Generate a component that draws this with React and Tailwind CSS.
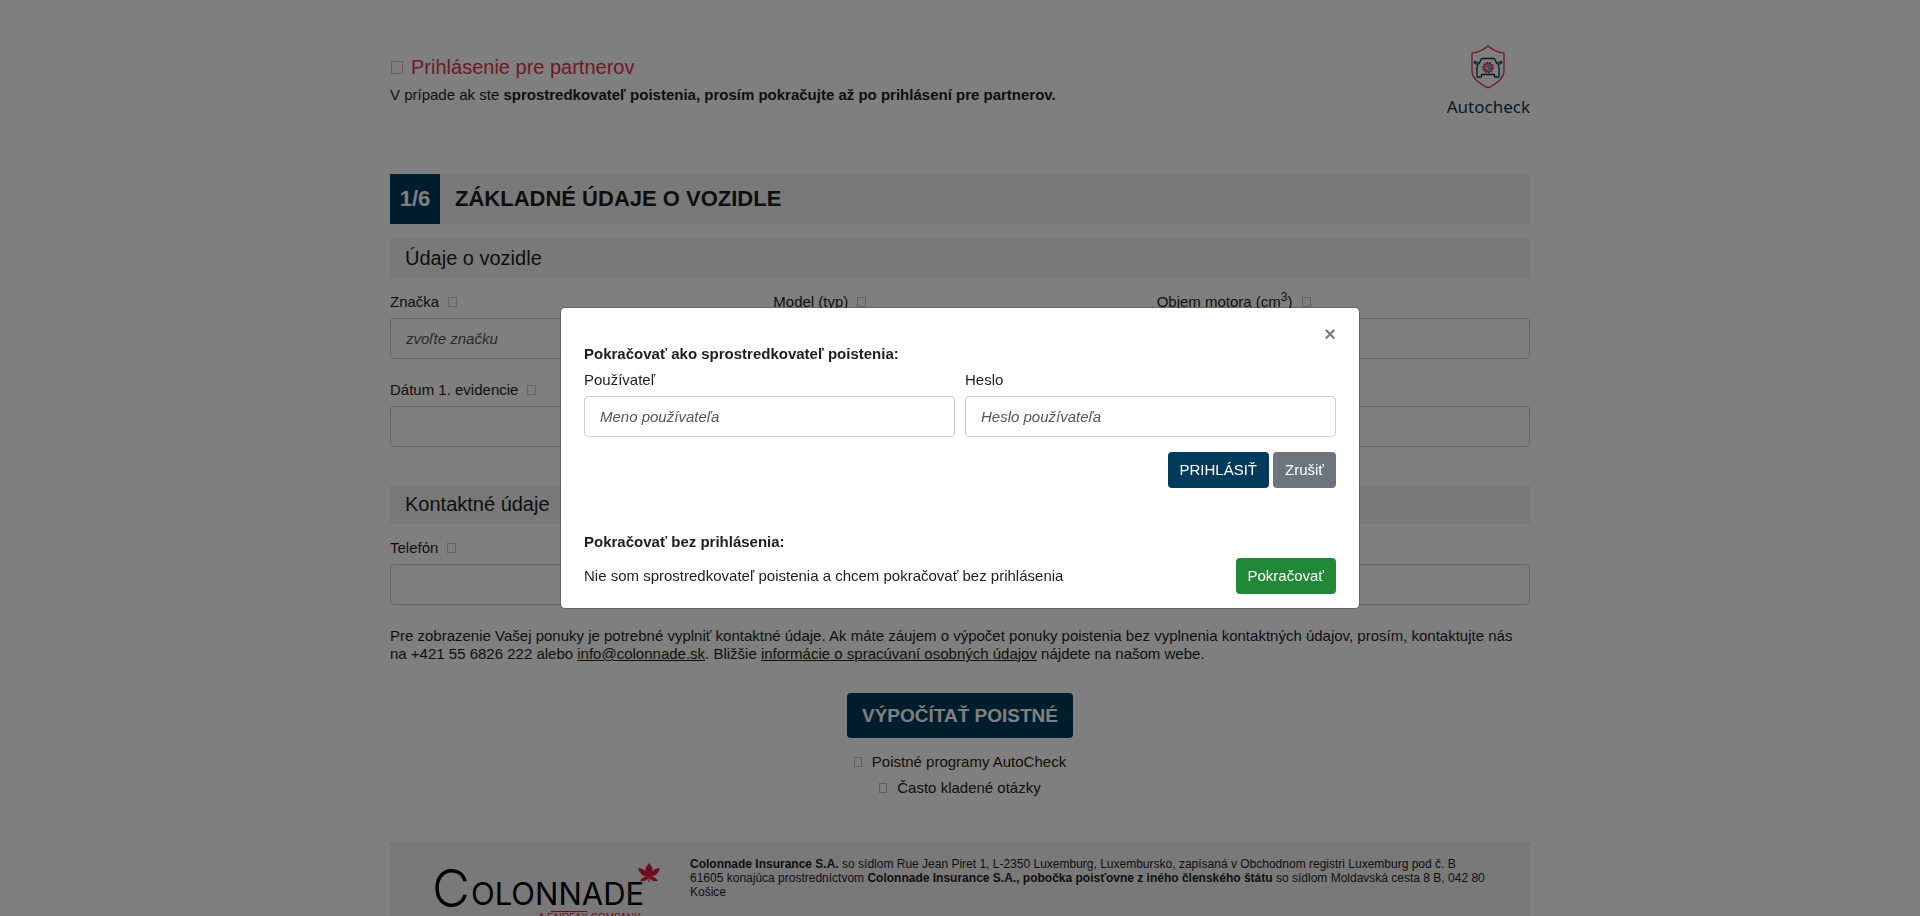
import React from 'react';

const inputClass =
  'block h-[41px] w-full rounded border border-[#ccc] bg-white px-[15px] text-[15px] text-[#1d1d1d] placeholder:italic placeholder:text-[#555]';

function Box({ className }) {
  return <span aria-hidden="true" className={`inline-block border ${className}`} />;
}

function Hint() {
  return <Box className="ml-[9px] h-[10px] w-[9px] border-[#b9ced6]" />;
}

function Field({ id, label, ...props }) {
  return (
    <div>
      <label htmlFor={id} className="mb-[7px] block h-[18px] whitespace-nowrap leading-[18px]">
        {label}
      </label>
      <input id={id} type="text" className={inputClass} {...props} />
    </div>
  );
}

function HintField({ label, ...props }) {
  return (
    <Field
      label={
        <>
          {label}
          <Hint />
        </>
      }
      {...props}
    />
  );
}

function SectionTitle({ children }) {
  return <h3 className="bg-[#f2f2f2] px-[15px] py-[7px] text-[20px] leading-[25px]">{children}</h3>;
}

function AutocheckLogo() {
  return (
    <div className="flex flex-col items-end text-[#003a5d]">
      <svg viewBox="0 0 34 44" fill="none" className="mr-[25px] h-11 w-[34px]" aria-hidden="true">
        <path
          d="M17 1C13 4.5 7 7.5 1 8v18c0 8 8 13 16 17 8-4 16-9 16-17V8C27 7.500 21 4.500 17 1Z"
          stroke="#e4173e"
          strokeWidth="1.200"
        />
        <path
          d="M8 19 10 14.500Q10.500 13.500 12 13.500h10q1.500 0 2 1L26 19M8 18l-4-1.500q-1 0-.5 1.500l3 1.500h1M26 18l4-1.500q1 0 .5 1.500l-3 1.500h-1M7 20q-2 3-1 7v5h4.500v-2.500h13V32H28v-5q1-4-1-7"
          stroke="#003a5d"
          strokeWidth="1.300"
          strokeLinejoin="round"
        />
        <circle cx="17" cy="22.500" r="5" stroke="#e4173e" strokeWidth="1.500" strokeDasharray="2 1" />
        <circle cx="17" cy="22.500" r="4" stroke="#e4173e" strokeWidth="1" />
        <circle cx="17" cy="22.500" r="2.600" stroke="#003a5d" strokeWidth="0.700" />
        <path d="M17 20.500v2.500h1.800" stroke="#003a5d" strokeWidth="1" />
      </svg>
      <span className="font-['Noto_Sans',sans-serif] text-[17px] leading-[36px]">Autocheck</span>
    </div>
  );
}

function ColonnadeLogo() {
  return (
    <svg viewBox="0 0 230 64" className="h-16 w-[230px]" role="img" aria-label="Colonnade, a Fairfax company">
      <text x="-3" y="46" fontFamily="Inter, sans-serif" fontWeight="300" fontSize="52" fill="#000">
        C
      </text>
      <text x="36" y="44" fontFamily="Inter, sans-serif" fontWeight="400" fontSize="31" fill="#000">
        OLONNADE
      </text>
      <g fill="#e4173e">
        <path d="M214 16Q207 9 214 2Q221 9 214 16Z" />
        <path d="M214 16Q205 15.500 203 7Q212 7.500 214 16Z" />
        <path d="M214 16Q223 15.500 225 7Q216 7.500 214 16Z" />
        <path d="M214 16Q208 14.500 205 20Q212 21 214 16Z" />
        <path d="M214 16Q220 14.500 223 20Q216 21 214 16Z" />
        <path d="M213.500 15h1v6h-1Z" />
      </g>
      <path d="M116 50.500h36" stroke="#e4173e" strokeWidth="1" />
      <text x="103" y="60" fontFamily="Liberation Sans, sans-serif" fontSize="10" fill="#e4173e">
        A FAIRFAX COMPANY
      </text>
    </svg>
  );
}

function LoginModal() {
  return (
    <div className="fixed inset-0 flex items-center justify-center bg-black/50 px-4">
      <div
        role="dialog"
        aria-modal="true"
        aria-label="Prihlásenie"
        className="w-full max-w-[800px] rounded-[5px] border border-black/20 bg-white bg-clip-padding px-[23px] pt-4 pb-[14px]"
      >
        <div className="flex justify-end">
          <button type="button" aria-label="Zavrieť" className="text-[20px] leading-5 font-bold text-[#7f7f7f]">
            ×
          </button>
        </div>
        <p className="mt-px leading-[18px] font-bold">Pokračovať ako sprostredkovateľ poistenia:</p>
        <form className="pt-2" onSubmit={(e) => e.preventDefault()}>
          <div className="grid grid-cols-2 gap-[10px]">
            <Field id="user" label="Používateľ" placeholder="Meno používateľa" />
            <Field id="password" label="Heslo" placeholder="Heslo používateľa" type="password" />
          </div>
          <div className="mt-[15px] flex justify-end gap-1">
            <button type="submit" className="h-9 rounded bg-[#003a5d] px-[12px] text-white">
              PRIHLÁSIŤ
            </button>
            <button type="button" className="h-9 rounded bg-[#6c757d] px-[12px] text-white">
              Zrušiť
            </button>
          </div>
        </form>
        <p className="mt-[45px] leading-[18px] font-bold">Pokračovať bez prihlásenia:</p>
        <div className="mt-[7px] flex items-center justify-between">
          <p>Nie som sprostredkovateľ poistenia a chcem pokračovať bez prihlásenia</p>
          <button type="button" className="h-9 rounded bg-[#218838] px-[12px] text-white">
            Pokračovať
          </button>
        </div>
      </div>
    </div>
  );
}

export default function App() {
  return (
    <div className="h-screen overflow-hidden bg-white font-['Liberation_Sans',Arial,sans-serif] text-[15px] leading-[18px] text-[#1d1d1d]">
      <div className="mx-auto max-w-[1140px]">
        <header className="flex justify-between pt-[45px]">
          <div className="pt-[9px]">
            <a href="#partner" className="flex items-center text-[20px] leading-[26px] text-[#dc3545]">
              <Box className="mr-2 ml-px h-[13px] w-3 border-[#eeb0b7]" />
              Prihlásenie pre partnerov
            </a>
            <p className="mt-1.5 leading-[18px]">
              V prípade ak ste{' '}
              <strong>sprostredkovateľ poistenia, prosím pokračujte až po prihlásení pre partnerov.</strong>
            </p>
          </div>
          <AutocheckLogo />
        </header>

        <main>
          <div className="mt-[49px] flex items-center bg-[#f2f2f2] text-[22px] leading-[50px] font-bold">
            <span className="w-[50px] bg-[#003a5d] text-center text-white">1/6</span>
            <h2 className="ml-[15px]">ZÁKLADNÉ ÚDAJE O VOZIDLE</h2>
          </div>

          <section className="mt-[15px]">
            <SectionTitle>Údaje o vozidle</SectionTitle>
            <div className="mt-[15px] grid grid-cols-3 gap-x-[10px] gap-y-[22px]">
              <HintField id="brand" label="Značka" placeholder="zvoľte značku" />
              <HintField id="model" label="Model (typ)" />
              <HintField
                id="engine"
                label={
                  <>
                    Objem motora (cm<sup className="text-[12px]">3</sup>)
                  </>
                }
              />
              <HintField id="date" label="Dátum 1. evidencie" />
              <HintField id="power" label="Výkon" />
              <HintField id="mileage" label="Počet km" />
            </div>
          </section>

          <section className="mt-[38px]">
            <SectionTitle>Kontaktné údaje</SectionTitle>
            <div className="mt-[15px] grid grid-cols-3 gap-x-[10px]">
              <HintField id="phone" label="Telefón" />
              <HintField id="email" label="E-mail" />
              <HintField id="zip" label="PSČ" />
            </div>
          </section>

          <p className="mt-[22px]">
            Pre zobrazenie Vašej ponuky je potrebné vyplniť kontaktné údaje. Ak máte záujem o výpočet ponuky poistenia
            bez vyplnenia kontaktných údajov, prosím, kontaktujte nás na +421 55 6826 222 alebo{' '}
            <a href="mailto:info@colonnade.sk" className="text-[#2b2306] underline">
              info@colonnade.sk
            </a>
            . Bližšie{' '}
            <a href="#privacy" className="text-[#2b2306] underline">
              informácie o spracúvaní osobných údajov
            </a>{' '}
            nájdete na našom webe.
          </p>

          <div className="mt-[30px] flex flex-col items-center">
            <button type="button" className="h-[45px] rounded bg-[#003a5d] px-[15px] text-[19px] font-bold text-white">
              VÝPOČÍTAŤ POISTNÉ
            </button>
            <a href="#programs" className="mt-[15px] text-[#2b2306]">
              <Box className="mr-2.5 h-[10px] w-2 border-[#bbb]" />
              Poistné programy AutoCheck
            </a>
            <a href="#faq" className="mt-2 text-[#2b2306]">
              <Box className="mr-2.5 h-[10px] w-2 border-[#bbb]" />
              Často kladené otázky
            </a>
          </div>
        </main>

        <footer className="mt-11 flex items-start gap-[25px] rounded bg-[#f2f2f2] pt-4 pr-10 pb-5 pl-[45px] text-[12px] leading-[14px]">
          <div className="shrink-0 pt-1">
            <ColonnadeLogo />
          </div>
          <div>
            <p>
              <strong>Colonnade Insurance S.A.</strong> so sídlom Rue Jean Piret 1, L-2350 Luxemburg, Luxembursko,
              zapísaná v Obchodnom registri Luxemburg pod č. B 61605 konajúca prostredníctvom{' '}
              <strong>Colonnade Insurance S.A., pobočka poisťovne z iného členského štátu</strong> so sídlom Moldavská
              cesta 8 B, 042 80 Košice
            </p>
            <p className="mt-[18px]">IČO: 50 013 602</p>
          </div>
        </footer>
      </div>
      <LoginModal />
    </div>
  );
}
